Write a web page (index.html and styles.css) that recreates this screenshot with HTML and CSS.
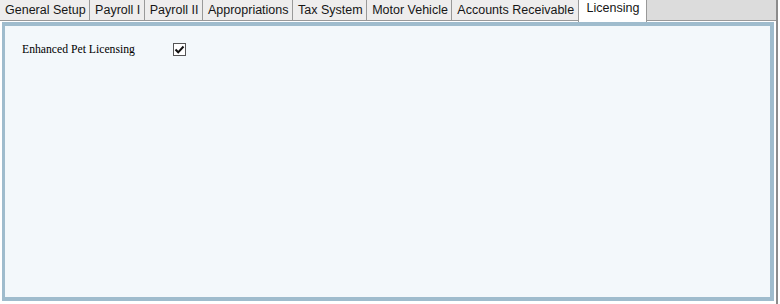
FILE: index.html
```html
<!DOCTYPE html>
<html>
<head>
  <title>Settings</title>
  <link rel="stylesheet" href="styles.css">
</head>
<body>
  <div class="tab-control">
    <ul class="tabs">
      <li class="tab">General Setup</li>
      <li class="tab">Payroll I</li>
      <li class="tab">Payroll II</li>
      <li class="tab">Appropriations</li>
      <li class="tab">Tax System</li>
      <li class="tab">Motor Vehicle</li>
      <li class="tab">Accounts Receivable</li>
      <li class="tab active">Licensing</li>
    </ul>
    <div class="tab-body">
      <div class="panel">
        <div class="field-row">
          <span class="field-label">Enhanced Pet Licensing</span>
          <span class="checkbox checked">
            <svg width="11" height="11" viewBox="0 0 11 11"><path d="M1.5 5.5 L4.2 8.3 L9.5 2.5" fill="none" stroke="#111" stroke-width="2"/></svg>
          </span>
        </div>
      </div>
    </div>
  </div>
</body>
</html>
```

FILE: styles.css
```css
body {
  margin: 0;
  background-color: #fff;
}

.tab-control {
  width: 776px;
  height: 304px;
  border-right: 2px solid #8c8c8c;
  display: flex;
  flex-direction: column;
}

.tabs {
  list-style: none;
  margin: 0;
  padding: 0;
  display: flex;
  height: 20px;
  background-color: #dcdcdc;
  position: relative;
  z-index: 1;
}

.tab {
  background-color: #eeeded;
  border-right: 1px solid #999;
  padding: 0 3.5px 0 5px;
  font-family: Arial, "Liberation Sans", sans-serif;
  font-size: 12.5px;
  line-height: 21px;
  color: #161616;
  height: 20px;
}

.tab.active {
  background-color: #fff;
  border-left: 1px solid #999;
  margin-left: -1px;
  height: 22px;
  line-height: 17px;
  padding: 0 7px 0 8px;
}

.tab-body {
  flex: 1;
  border-top: 1px solid #999;
  padding: 1px 2px 3px 2px;
  display: flex;
}

.panel {
  flex: 1;
  border: 4px solid #9fbccd;
  border-left-width: 3px;
  background-color: #f3f8fb;
  padding: 13px 0 0 17px;
}

.field-row {
  display: flex;
  align-items: center;
  height: 20px;
}

.field-label {
  font-family: "Liberation Serif", "Times New Roman", serif;
  font-size: 11.7px;
  color: #000;
  width: 151px;
}

.checkbox {
  width: 11px;
  height: 11px;
  border: 1px solid #555;
  background-color: #fff;
  display: flex;
  align-items: center;
  justify-content: center;
}
```
